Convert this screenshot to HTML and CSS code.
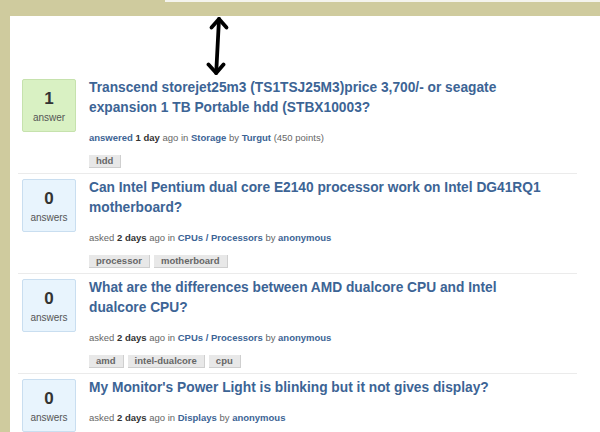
FILE: index.html
```html
<!DOCTYPE html>
<html>
<head>
<meta charset="utf-8">
<link rel="stylesheet" href="styles.css">
</head>
<body>
<div class="topbar"><div class="topstrip"></div></div>
<div class="main">
  <div class="qlist">
    <div class="item">
      <div class="count answered"><span class="num">1</span><span class="lbl">answer</span></div>
      <div class="body">
        <a class="title">Transcend storejet25m3 (TS1TSJ25M3)price 3,700/- or seagate expansion 1 TB Portable hdd (STBX10003?</a>
        <div class="meta"><span class="lnk">answered</span> <b>1 day</b> ago in <span class="lnk">Storage</span> by <span class="lnk">Turgut</span> (450 points)</div>
        <div class="tags"><span class="tag">hdd</span></div>
      </div>
    </div>
    <div class="item">
      <div class="count"><span class="num">0</span><span class="lbl">answers</span></div>
      <div class="body">
        <a class="title">Can Intel Pentium dual core E2140 processor work on Intel DG41RQ1 motherboard?</a>
        <div class="meta">asked <b>2 days</b> ago in <span class="lnk">CPUs / Processors</span> by <span class="lnk">anonymous</span></div>
        <div class="tags"><span class="tag">processor</span><span class="tag">motherboard</span></div>
      </div>
    </div>
    <div class="item">
      <div class="count"><span class="num">0</span><span class="lbl">answers</span></div>
      <div class="body">
        <a class="title">What are the differences between AMD dualcore CPU and Intel dualcore CPU?</a>
        <div class="meta">asked <b>2 days</b> ago in <span class="lnk">CPUs / Processors</span> by <span class="lnk">anonymous</span></div>
        <div class="tags"><span class="tag">amd</span><span class="tag">intel-dualcore</span><span class="tag">cpu</span></div>
      </div>
    </div>
    <div class="item">
      <div class="count"><span class="num">0</span><span class="lbl">answers</span></div>
      <div class="body">
        <a class="title">My Monitor's Power Light is blinking but it not gives display?</a>
        <div class="meta">asked <b>2 days</b> ago in <span class="lnk">Displays</span> by <span class="lnk">anonymous</span></div>
      </div>
    </div>
  </div>
</div>
<svg class="arrow" width="24" height="62" viewBox="0 0 24 62">
  <g fill="none" stroke="#000" stroke-width="3.8" stroke-linecap="round" stroke-linejoin="round">
    <path d="M13 3 L10.2 57"/>
    <path d="M5.5 11.5 L13 3 L20.5 11.5"/>
    <path d="M2.5 48.5 L10.2 57 L17.5 48.5"/>
  </g>
</svg>
</body>
</html>
```

FILE: styles.css
```css
html, body {
  margin: 0;
  padding: 0;
}
body {
  background: #cfcb9e;
  font-family: "Liberation Sans", Arial, sans-serif;
  height: 432px;
  overflow: hidden;
  position: relative;
}
.topbar {
  height: 16px;
}
.topstrip {
  margin-left: 165px;
  height: 2px;
  background: #f4f4ee;
}
.main {
  margin-left: 10px;
  background: #ffffff;
  height: 416px;
  padding-top: 58px;
  box-sizing: border-box;
}
.qlist {
  margin-left: 8px;
  margin-right: 23px;
}
.item {
  display: flex;
  align-items: flex-start;
  gap: 13px;
  padding: 4px 0 5px 4px;
  border-bottom: 1px solid #ebebeb;
}
.count {
  flex: none;
  width: 52px;
  height: 51px;
  margin-top: 1px;
  border: 1px solid #c9def0;
  border-radius: 2px;
  background: #e8f4fd;
  display: flex;
  flex-direction: column;
  align-items: center;
}
.count.answered {
  background: #d9f1c3;
  border-color: #c6e2ad;
}
.num {
  font-size: 17px;
  font-weight: bold;
  color: #333;
  line-height: 20px;
  margin-top: 9px;
}
.lbl {
  font-size: 10px;
  color: #555;
  line-height: 12px;
  margin-top: 3px;
}
.body {
  flex: 1;
  padding-right: 26px;
}
.title {
  display: block;
  font-size: 13.75px;
  font-weight: bold;
  line-height: 20px;
  color: #3c6495;
  text-decoration: none;
}
.meta {
  margin-top: 13px;
  font-size: 9.5px;
  line-height: 14px;
  color: #666;
}
.meta b {
  color: #333;
}
.lnk {
  color: #3c6495;
  font-weight: bold;
}
.tags {
  margin-top: 10px;
  display: flex;
  gap: 4px;
  height: 13px;
}
.tag {
  display: inline-block;
  height: 12px;
  line-height: 12px;
  padding: 0 7px;
  background: #e8e8e8;
  border-right: 1px solid #cfcfcf;
  border-bottom: 1px solid #cfcfcf;
  font-size: 9.5px;
  font-weight: bold;
  color: #666;
}
.arrow {
  position: absolute;
  left: 206px;
  top: 16px;
}
```
